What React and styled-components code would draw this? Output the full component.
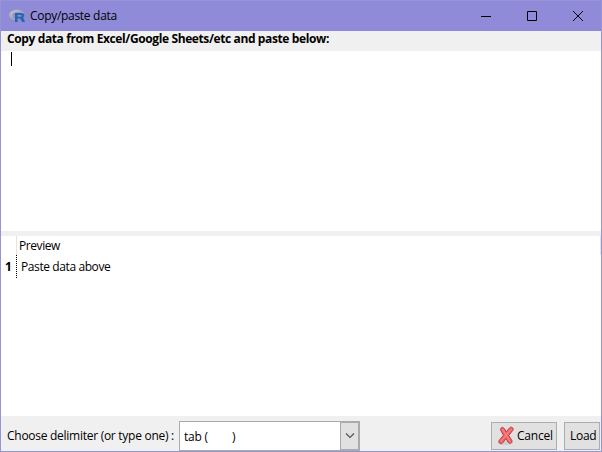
import React from "react";
import styled, { createGlobalStyle } from "styled-components";

const GlobalStyle = createGlobalStyle`
  * { box-sizing: border-box; }
  body { margin: 0; overflow: hidden; }
`;

const Window = styled.div`
  width: 602px;
  height: 452px;
  display: flex;
  flex-direction: column;
  border: 1px solid #9693d9;
  background: #f0f0f0;
  color: #000;
  font: 12px/16px "Open Sans", "Noto Sans", sans-serif;
  white-space: pre;
`;

const TitleBar = styled.header`
  height: 30px;
  flex: none;
  display: flex;
  align-items: center;
  padding: 0 1px 0 8px;
  background: #8f8bd8;
`;

const Label = styled.span`
  letter-spacing: ${(p) => p.$track || 0}px;
`;

const Title = styled(Label)`
  flex: 1;
  padding-left: 5px;
`;

const WindowButton = styled.span`
  width: 46px;
  height: 29px;
  display: flex;
  align-items: center;
  justify-content: center;
  &:last-child { width: 45px; }
`;

const Instruction = styled.div`
  height: 20px;
  flex: none;
  padding-left: 6px;
  font-weight: 700;
  letter-spacing: ${(p) => p.$track}px;
`;

const PasteArea = styled.div`
  height: 180px;
  flex: none;
  padding: 1px 10px;
  background: #fff;
`;

const Caret = styled.div`
  width: 1px;
  height: 14px;
  background: #000;
`;

const PreviewTable = styled.section`
  height: 180px;
  flex: none;
  margin-top: 5px;
  background: #fff;
`;

const TableRow = styled.div`
  display: grid;
  grid-template-columns: 15px 1fr;
  height: ${(p) => p.$height}px;
`;

const HeaderRow = styled(TableRow)`
  border-right: 1px solid #e3e3e3;
`;

const HeaderCell = styled.div`
  display: flex;
  align-items: center;
  padding: 1px 0 0 2px;
  border-left: 1px solid #e3e3e3;
`;

const RowNumber = styled.div`
  padding: 4px 0 0 4px;
  font-weight: 700;
`;

const DataCell = styled.div`
  padding: 4px 0 0 5px;
  background: repeating-linear-gradient(#000 0 1px, #fff 1px 2px) 0 0 / 1px 24px no-repeat;
`;

const Footer = styled.footer`
  flex: 1;
  display: flex;
  align-items: flex-start;
  padding: 5px 1px 0 6px;
`;

const DelimiterLabel = styled(Label)`
  width: 172px;
  padding-top: 7px;
`;

const Combo = styled.div`
  width: 181px;
  height: 30px;
  display: flex;
  border: 1px solid #ababab;
  background: #fff;
`;

const ComboValue = styled.span`
  flex: 1;
  display: flex;
  padding: 7px 0 0 4px;
  letter-spacing: -0.2px;
`;

const TabGap = styled.span`
  width: 24px;
`;

const ComboArrow = styled.span`
  width: 19px;
  display: flex;
  align-items: center;
  justify-content: center;
  border: 1px solid #ababab;
  background: #e1e1e1;
`;

const Spacer = styled.div`
  flex: 1;
`;

const Button = styled.button`
  width: ${(p) => p.$width}px;
  height: 28px;
  margin: 1px 0 0 ${(p) => p.$gap || 0}px;
  padding: 0 0 0 5px;
  display: flex;
  align-items: center;
  border: 1px solid #adadad;
  border-radius: 0;
  background: #e1e1e1;
  color: #000;
  font: inherit;
`;

const RLogo = () => (
  <svg width="16" height="14" viewBox="0 0 16 14">
    <defs>
      <linearGradient id="ring" x1="0" y1="0" x2="1" y2="1">
        <stop offset="0" stopColor="#c8c9d2" />
        <stop offset="1" stopColor="#85868e" />
      </linearGradient>
    </defs>
    <path fillRule="evenodd" fill="url(#ring)" d="M8 .8C3.600.8.3 3.200.3 6.200s3.300 5.400 7.700 5.400 7.700-2.400 7.700-5.400S12.400.8 8 .8Zm1.100 2.400c3.300 0 5.300 1.100 5.300 3.200s-2 3.200-5.300 3.200-5.500-1.100-5.500-3.200 2.200-3.200 5.500-3.200Z" />
    <path fillRule="evenodd" fill="#2468b4" d="M6 4h6.200c2 0 3.100.9 3.100 2.500 0 1.100-.6 1.900-1.600 2.200.5.200.8.500 1.100 1L16 13h-2.900l-1.400-2.700c-.3-.6-.5-.8-1.100-.8H8.600V13H6V4Zm2.600 2v1.700h2.600c1 0 1.500-.2 1.500-.9S12.200 6 11.200 6H8.600Z" />
  </svg>
);

const RedCross = () => (
  <svg width="20" height="22" viewBox="0 0 20 22">
    <ellipse cx="8.500" cy="18" rx="7.500" ry="2" fill="#c7c7c7" opacity=".7" />
    <path
      d="M4.500 2.700c.9-.6 2-.3 2.600.7l2.200 3.500 3.200-4c.8-.9 2.100-1 3-.2.900.8.900 2 .1 2.900l-3.900 4.800 3 4.800c.6 1 .4 2.100-.6 2.800-1 .6-2.300.3-2.900-.7l-2.300-3.600-3.400 4.300c-.8.900-2.100.9-3 .1s-.9-2-.1-2.900l4.100-5L3.800 5.500C3.200 4.500 3.500 3.300 4.500 2.700Z"
      fill="#f0686c" stroke="#c4383d" strokeWidth="1"
    />
    <path d="m5.300 4.200 8 12.500M14.200 4.200 3.900 16.400" stroke="#fa8a8d" strokeWidth="1" fill="none" />
  </svg>
);

export default function App() {
  return (
    <>
      <GlobalStyle />
      <Window>
        <TitleBar>
          <RLogo />
          <Title $track={-0.3}>Copy/paste data</Title>
          <WindowButton>
            <svg width="10" height="10"><path d="M0 5.500h10" stroke="#000" /></svg>
          </WindowButton>
          <WindowButton>
            <svg width="10" height="10"><path d="M.5.5h9v9h-9Z" fill="none" stroke="#000" /></svg>
          </WindowButton>
          <WindowButton>
            <svg width="10" height="10"><path d="m0 0 10 10M10 0 0 10" stroke="#000" /></svg>
          </WindowButton>
        </TitleBar>
        <Instruction $track={-0.385}>Copy data from Excel/Google Sheets/etc and paste below:</Instruction>
        <PasteArea><Caret /></PasteArea>
        <PreviewTable>
          <HeaderRow $height={19}>
            <span />
            <HeaderCell><Label $track={-0.43}>Preview</Label></HeaderCell>
          </HeaderRow>
          <TableRow $height={24}>
            <RowNumber>1</RowNumber>
            <DataCell><Label $track={-0.4}>Paste data above</Label></DataCell>
          </TableRow>
        </PreviewTable>
        <Footer>
          <DelimiterLabel $track={-0.27}>Choose delimiter (or type one) :</DelimiterLabel>
          <Combo>
            <ComboValue><span>tab (</span><TabGap /><span>)</span></ComboValue>
            <ComboArrow>
              <svg width="10" height="6"><path d="m1 .5 4 4 4-4" fill="none" stroke="#555" strokeWidth="1.200" /></svg>
            </ComboArrow>
          </Combo>
          <Spacer />
          <Button $width={66}><RedCross /><Label $track={-0.2}>Cancel</Label></Button>
          <Button $width={36} $gap={7}><Label $track={-0.3}>Load</Label></Button>
        </Footer>
      </Window>
    </>
  );
}
